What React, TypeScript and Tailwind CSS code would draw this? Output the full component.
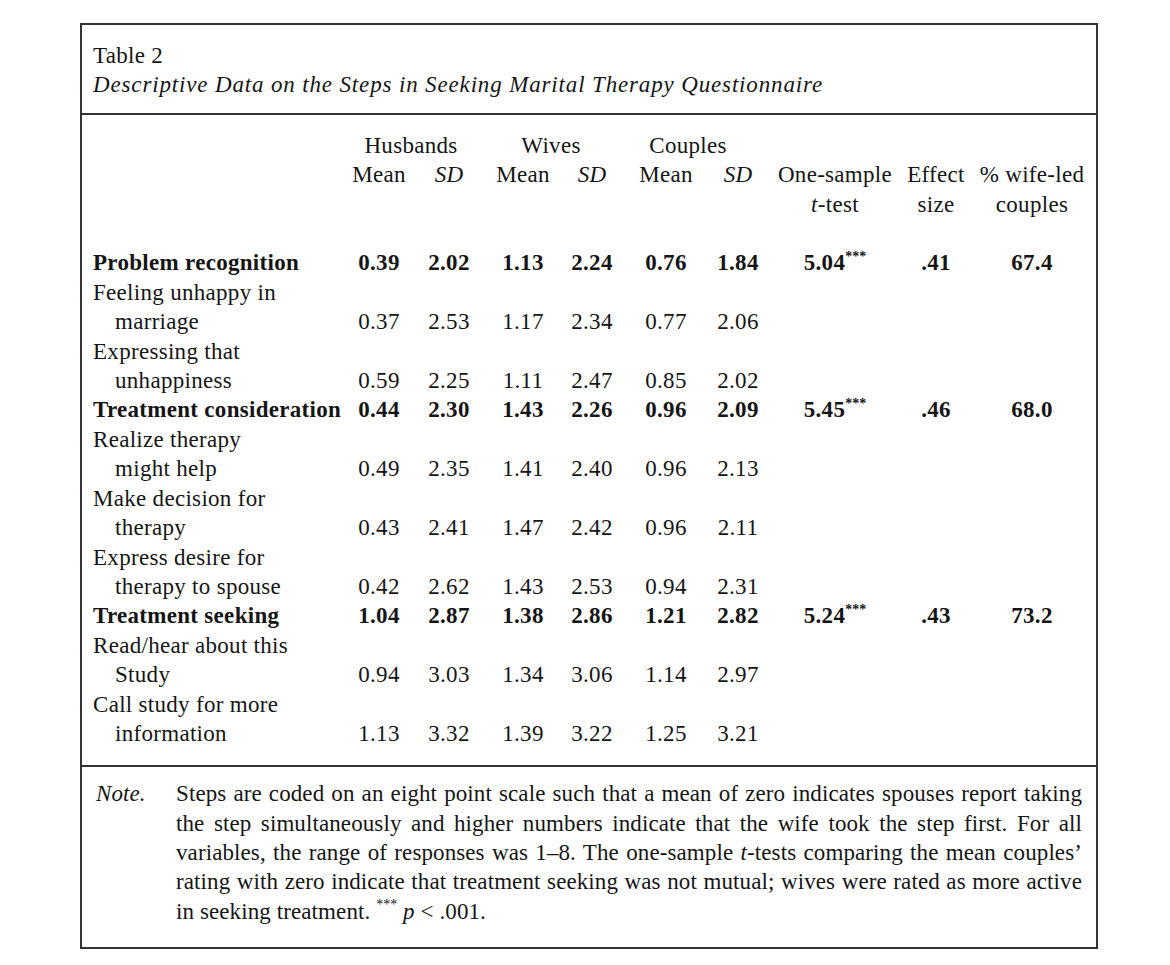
import React from "react";

type Row = {
  label: string[];
  bold?: boolean;
  v: string[];
  t?: string;
  e?: string;
  p?: string;
};

const rows: Row[] = [
  { label: ["Problem recognition"], bold: true, v: ["0.39", "2.02", "1.13", "2.24", "0.76", "1.84"], t: "5.04", e: ".41", p: "67.4" },
  { label: ["Feeling unhappy in", "marriage"], v: ["0.37", "2.53", "1.17", "2.34", "0.77", "2.06"] },
  { label: ["Expressing that", "unhappiness"], v: ["0.59", "2.25", "1.11", "2.47", "0.85", "2.02"] },
  { label: ["Treatment consideration"], bold: true, v: ["0.44", "2.30", "1.43", "2.26", "0.96", "2.09"], t: "5.45", e: ".46", p: "68.0" },
  { label: ["Realize therapy", "might help"], v: ["0.49", "2.35", "1.41", "2.40", "0.96", "2.13"] },
  { label: ["Make decision for", "therapy"], v: ["0.43", "2.41", "1.47", "2.42", "0.96", "2.11"] },
  { label: ["Express desire for", "therapy to spouse"], v: ["0.42", "2.62", "1.43", "2.53", "0.94", "2.31"] },
  { label: ["Treatment seeking"], bold: true, v: ["1.04", "2.87", "1.38", "2.86", "1.21", "2.82"], t: "5.24", e: ".43", p: "73.2" },
  { label: ["Read/hear about this", "Study"], v: ["0.94", "3.03", "1.34", "3.06", "1.14", "2.97"] },
  { label: ["Call study for more", "information"], v: ["1.13", "3.32", "1.39", "3.22", "1.25", "3.21"] },
];

const cols = "grid grid-cols-[251px_70px_70px_78px_60px_88px_56px_138px_64px_128px] leading-[29.4px]";

function Stars() {
  return <sup className="text-[14px] top-[-0.7em] font-bold tracking-normal">***</sup>;
}

function DataRows() {
  return (
    <>
      {rows.map((r, i) => {
        const last = r.label[r.label.length - 1];
        const first = r.label.length > 1 ? r.label[0] : null;
        const w = r.bold ? "font-bold" : "";
        return (
          <React.Fragment key={i}>
            {first && <div className="col-span-10">{first}</div>}
            <div className={`${w} ${first ? "pl-[22px]" : ""} whitespace-nowrap`}>{last}</div>
            {r.v.map((n, j) => (
              <div key={j} className={`${w} text-center`}>{n}</div>
            ))}
            <div className="font-bold text-center">
              {r.t && (
                <>
                  {r.t}
                  <Stars />
                </>
              )}
            </div>
            <div className="font-bold text-center">{r.e}</div>
            <div className="font-bold text-center">{r.p}</div>
          </React.Fragment>
        );
      })}
    </>
  );
}

export default function App() {
  return (
    <div className="min-h-screen bg-white pt-[23px] pl-[80px] font-['Liberation_Serif',serif] text-[23px] tracking-[0.3px] text-[#151515]">
      <div className="w-[1018px] border-2 border-[#333]">
        {/* Title */}
        <div className="border-b-2 border-[#333] pl-[11px] pt-[16px] pb-[13px] leading-[29.4px]">
          <div>Table 2</div>
          <div className="italic tracking-[0.85px]">Descriptive Data on the Steps in Seeking Marital Therapy Questionnaire</div>
        </div>

        {/* Body */}
        <div className="border-b-2 border-[#333] pl-[11px] pt-[16px] pb-[17px]">
          <div className={cols}>
            <div />
            <div className="col-span-2 text-center pr-[6px]">Husbands</div>
            <div className="col-span-2 text-center pr-[4px]">Wives</div>
            <div className="col-span-2 text-center pr-[12px]">Couples</div>
            <div className="col-span-3" />

            <div />
            <div className="text-center">Mean</div>
            <div className="text-center italic">SD</div>
            <div className="text-center">Mean</div>
            <div className="text-center italic">SD</div>
            <div className="text-center">Mean</div>
            <div className="text-center italic">SD</div>
            <div className="text-center">One-sample</div>
            <div className="text-center">Effect</div>
            <div className="text-center">% wife-led</div>

            <div className="col-span-7" />
            <div className="text-center">
              <span className="italic">t</span>-test
            </div>
            <div className="text-center">size</div>
            <div className="text-center">couples</div>

            <div className="col-span-10">&nbsp;</div>

            <DataRows />
          </div>
        </div>

        {/* Note */}
        <div className="flex pl-[14px] pt-[12px] pb-[21px] leading-[29.3px] tracking-[0.1px]">
          <div className="w-[80px] shrink-0 italic">Note.</div>
          <div className="w-[906px] text-justify whitespace-nowrap">
            <div className="[text-align-last:justify]">
              Steps are coded on an eight point scale such that a mean of zero indicates spouses report taking
            </div>
            <div className="[text-align-last:justify]">
              the step simultaneously and higher numbers indicate that the wife took the step first. For all
            </div>
            <div className="[text-align-last:justify]">
              variables, the range of responses was 1–8. The one-sample <span className="italic">t</span>-tests comparing the mean couples’
            </div>
            <div className="[text-align-last:justify]">
              rating with zero indicate that treatment seeking was not mutual; wives were rated as more active
            </div>
            <div>
              in seeking treatment. <sup className="text-[14px] top-[-0.7em] tracking-normal">***</sup> <span className="italic">p</span> &lt; .001.
            </div>
          </div>
        </div>
      </div>
    </div>
  );
}
